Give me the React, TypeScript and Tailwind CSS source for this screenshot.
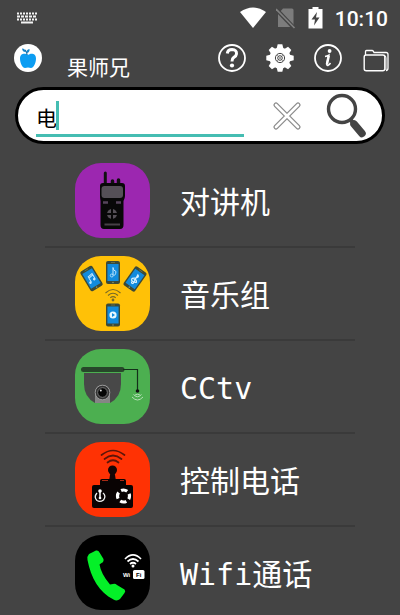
import { memo, useState, type ReactNode } from "react";

const StatusBar = memo(function StatusBar() {
  return (
    <div className="flex h-9 items-center justify-between pl-4 pr-3">
      <svg width="22" height="12" viewBox="0 0 22 12" fill="none" stroke="#f4f4f4">
        <path d="M1 1.500H21" strokeWidth="2" strokeDasharray="2 1" />
        <path d="M1 4.500H21" strokeWidth="2" strokeDasharray="3 1" />
        <path d="M1 7.500H21" strokeWidth="2" strokeDasharray="2 1" />
        <path d="M5 10.500H17" strokeWidth="2" />
      </svg>
      <div className="flex items-center">
        <svg width="26" height="22" viewBox="0 0 26 22" fill="#fff">
          <path d="M0 5Q13-4 26 5L13 21Z" />
        </svg>
        <svg className="ml-2.5" width="20" height="22" viewBox="0 0 20 22">
          <path d="M7 1.500H16Q17.500 1.500 17.500 3V20H2V7Z" fill="#7c7c7c" />
          <path d="M0 2L18 21" stroke="#444" strokeWidth="4" />
          <path d="M0 2L18.500 21" stroke="#808080" strokeWidth="1.700" />
        </svg>
        <svg className="ml-3" width="15" height="22" viewBox="0 0 15 22">
          <path d="M4.500 0H10.500V2H14.500V21.500H.5V2H4.500Z" fill="#fff" />
          <path d="M9 5L3.500 12.500H7L6 18.500L11.500 10.500H8Z" fill="#444" />
        </svg>
        <span className="ml-3 pt-0.5 font-['Roboto',sans-serif] text-[21px] font-medium leading-9 text-white">
          10:10
        </span>
      </div>
    </div>
  );
});

function GearIcon() {
  return (
    <svg width="28" height="28" viewBox="0 0 28 28">
      <g fill="#fff">
        <circle cx="14" cy="14" r="10.500" />
        {[0, 45, 90, 135, 180, 225, 270, 315].map((angle) => (
          <path
            key={angle}
            d="M10.500 5L11.700 .3H16.300L17.500 5Z"
            transform={`rotate(${angle} 14 14)`}
          />
        ))}
      </g>
      <g fill="none" stroke="#444">
        <circle cx="14" cy="14" r="4.600" />
        <circle cx="14" cy="14" r="2.300" />
        <path d="M11 11L17 17M17 11L11 17" strokeWidth=".5" />
      </g>
    </svg>
  );
}

const Header = memo(function Header() {
  return (
    <header className="flex h-12 items-start pl-3.5 pr-2.5 pt-2">
      <svg width="28" height="28" viewBox="0 0 28 28">
        <circle cx="14" cy="14" r="14" fill="#fff" />
        <path
          d="M14 11C16 9 22 8.500 22 14.500C22 19 19.500 24 17 24Q14 23 11 24C8.500 24 6 19 6 14.500C6 8.500 12 9 14 11Z"
          fill="#0c9df2"
        />
        <path d="M13 11Q13 8 11 6" fill="none" stroke="#176fa8" strokeWidth="1.300" />
        <path d="M8 4.500Q11.500 4.500 11.500 8Q8.500 8 8 4.500ZM13 9Q12 5.500 15.500 5Q16 8 13 9Z" fill="#1685c9" />
      </svg>
      <h1 className="ml-[25px] mt-2.5 font-['Noto_Sans_CJK_SC',sans-serif] text-[21px] leading-6 text-white">
        果师兄
      </h1>
      <nav className="ml-auto flex gap-5">
        <button type="button" aria-label="帮助">
          <svg width="28" height="28" viewBox="0 0 28 28" fill="none" stroke="#fff">
            <circle cx="14" cy="14" r="13" strokeWidth="1.800" />
            <path d="M9.300 9.500Q9.700 5.500 14.100 5.500Q18.800 5.800 18.500 9.800Q18.300 12 15.800 13.400Q14 14.500 14 17.500" strokeWidth="3" />
            <circle cx="14" cy="21.500" r="2.100" fill="#fff" stroke="none" />
          </svg>
        </button>
        <button type="button" aria-label="设置">
          <GearIcon />
        </button>
        <button type="button" aria-label="关于">
          <svg width="28" height="28" viewBox="0 0 28 28" fill="none" stroke="#fff">
            <circle cx="14" cy="14" r="13" strokeWidth="1.800" />
            <circle cx="15.600" cy="7" r="1.900" fill="#fff" stroke="none" />
            <path d="M11 12.500Q13 12.300 14.800 11.200L12.800 19.500Q12.500 22 14.300 21.200Q15.500 20.500 16.500 19" strokeWidth="1.500" />
            <path d="M14.800 11.500L12.900 20.500" strokeWidth="2.500" />
          </svg>
        </button>
        <button type="button" aria-label="文件夹">
          <svg width="28" height="28" viewBox="0 0 28 28" fill="none" stroke="#fff">
            <path d="M3.500 11V7.500Q3.500 6.500 4.500 6.500H10Q11 6.500 11.500 7.500L12 8.500H24Q26 8.500 26 10.500V24Q26 26.500 24 26.500" strokeWidth="1.300" />
            <rect x="2.200" y="11" width="20.600" height="15.800" rx="2" strokeWidth="1.400" />
            <path d="M22 11Q24 11.500 24 14V26" strokeWidth="1" />
          </svg>
        </button>
      </nav>
    </header>
  );
});

function SearchBar() {
  const [query, setQuery] = useState("电");

  return (
    <form
      className="mx-[15px] mt-[3px] flex h-[57px] shrink-0 items-center rounded-full border-3 border-black bg-white pl-[18px] pr-3.5"
      onSubmit={(e) => e.preventDefault()}
    >
      <div className="relative mr-7 mt-1 min-w-0 flex-1">
        <input
          type="text"
          aria-label="搜索"
          value={query}
          onChange={(e) => setQuery(e.target.value)}
          className="block h-[38px] w-full border-b-3 border-[#45bdb2] bg-transparent pt-0.5 font-['Noto_Sans_CJK_SC',sans-serif] text-[21px] leading-8 text-black caret-transparent outline-none"
        />
        <span className="absolute left-5 top-0.5 h-[29px] w-[3px] bg-[#45bdb2]" />
      </div>
      <button type="button" aria-label="清除" onClick={() => setQuery("")}>
        <svg width="30" height="30" viewBox="0 0 30 30" fill="none" strokeLinecap="round">
          <path d="M4 4L26 26M26 4L4 26" stroke="#8c8c8c" strokeWidth="5.200" />
          <path d="M4 4L26 26M26 4L4 26" stroke="#fff" strokeWidth="2.600" />
        </svg>
      </button>
      <button type="submit" aria-label="查找" className="ml-6">
        <svg width="42" height="46" viewBox="0 0 42 46" fill="none" stroke="#444">
          <circle cx="16" cy="16" r="13.500" strokeWidth="3.400" />
          <path d="M24 26L27 30" strokeWidth="4" />
          <path d="M28 31L36 40.500" strokeWidth="7.500" strokeLinecap="round" />
        </svg>
      </button>
    </form>
  );
}

function RadioIcon() {
  return (
    <>
      <path d="M30.300 10V24" stroke="#111" strokeWidth="3" strokeLinecap="round" />
      <path d="M37.500 18V24M43.500 17V24" stroke="#111" strokeWidth="3.500" strokeLinecap="round" />
      <path
        d="M28 20H47Q50 20 50 23V33Q50 35 48.500 38V62Q48.500 66 45 66H29Q25.500 66 25.500 62V38Q25 35 25 33V23Q25 20 28 20Z"
        fill="#080808"
      />
      <rect x="26.500" y="23" width="21.500" height="12" rx="3" fill="#555057" />
      <path d="M28 39.500H33M41 39.500H46" stroke="#55445b" strokeWidth="2.500" />
      <circle cx="37" cy="51" r="5" fill="#555057" />
      <path d="M37 45V57M31 51H43" stroke="#080808" strokeWidth="2" />
      <path d="M29.500 61.500H45" stroke="#474047" strokeWidth="2" />
    </>
  );
}

function Phone({ transform, children }: { transform: string; children: ReactNode }) {
  return (
    <g transform={transform}>
      <rect x="-7" y="-11.500" width="14" height="23" rx="2" fill="#3d4a37" />
      <rect x="-5.600" y="-8.500" width="11.200" height="17" fill="#128bdd" />
      <path d="M-2-10H2" stroke="#758054" strokeWidth=".7" />
      <circle cy="10" r=".8" fill="#8a956a" />
      {children}
    </g>
  );
}

function MusicIcon() {
  return (
    <>
      <Phone transform="translate(16.500 22.500) rotate(-31)">
        <path d="M-2 3V-3L3-4V2M-2-1.500L3-2.500" fill="none" stroke="#c3e8ff" strokeWidth="1" />
        <circle cx="-3" cy="3" r="1.300" fill="#c3e8ff" />
        <circle cx="2" cy="2" r="1.300" fill="#c3e8ff" />
      </Phone>
      <Phone transform="translate(38 16.500)">
        <path d="M0 3V-5Q0-2 3-1Q3 1 1.500 3" fill="none" stroke="#c3e8ff" strokeWidth="1" />
        <circle cx="-1.200" cy="3" r="1.500" fill="none" stroke="#c3e8ff" strokeWidth=".8" />
      </Phone>
      <Phone transform="translate(60 23) rotate(35)">
        <path
          d="M1 5Q-1 6-1 4M1 5L0-5Q3-4 0-1Q-4 1-2 3Q1 4 3 2Q2-1-1 1"
          fill="none"
          stroke="#d5f0ff"
          strokeWidth="1.200"
        />
      </Phone>
      <Phone transform="translate(38 59)">
        <circle r="3.600" fill="#e9f8ff" />
        <path d="M-1-2L2 0L-1 2Z" fill="#128bdd" />
      </Phone>
      <g fill="none" stroke="#786a27" strokeWidth="1.100">
        <path d="M30.500 37Q38 30 45.500 37" />
        <path d="M33 39.500Q38 35 43 39.500" />
        <path d="M35.300 41.700Q38 39.500 40.700 41.700" />
      </g>
      <circle cx="38" cy="44" r="1.400" fill="#786a27" />
    </>
  );
}

function CameraIcon() {
  return (
    <>
      <path d="M9 24H46V35Q46 48 35 54H20Q9 48 9 35Z" fill="#484848" />
      <path d="M20 54V44Q20 36 27.500 36Q35 36 35 44V54Z" fill="#858585" />
      <path d="M8.500 20.500H47" stroke="#27472a" strokeWidth="5" strokeLinecap="round" />
      <path d="M48 20.500H62.500V42" fill="none" stroke="#14301a" strokeWidth="1.200" />
      <circle cx="27.500" cy="43.500" r="7.300" fill="#333" stroke="#aaa" strokeWidth=".8" />
      <circle cx="27.500" cy="43.500" r="4.800" fill="#050505" stroke="#888" strokeWidth=".8" />
      <circle cx="25.800" cy="41.500" r="1" fill="#ddd" />
      <circle cx="62.500" cy="42" r="1.800" fill="#111" />
      <g fill="none" stroke="#b4deb6" strokeWidth="1">
        <path d="M60 46Q62.500 44.500 65 46" />
        <path d="M58.500 45.500Q62.500 50 66.500 45.500" />
        <path d="M57 48Q62.500 54 68 48" />
      </g>
    </>
  );
}

function RemoteIcon() {
  return (
    <>
      <g fill="none" stroke="#5c1509" strokeWidth="1.700" strokeLinecap="round">
        <path d="M26.500 13Q38 4 49.500 13" />
        <path d="M29.500 17Q38 10 46.500 17" />
        <path d="M32.500 20.500Q38 16 43.500 20.500" />
      </g>
      <circle cx="37.500" cy="28" r="4.500" fill="#150606" />
      <path d="M35.500 30H39.500L41 39H34Z" fill="#150606" />
      <path d="M27 37H49Q51 37 51 39V44H25V39Q25 37 27 37Z" fill="#090303" />
      <path d="M27 38.500H33M45 38.500H49" stroke="#a82a14" strokeWidth="1" />
      <rect x="17" y="43" width="41" height="23" rx="2" fill="#090303" />
      <path d="M22 51Q18.500 55 22 58.500Q25 60.500 28.500 58Q31.500 54 28 51" fill="none" stroke="#eee" strokeWidth="1.300" />
      <path d="M25 49V56" stroke="#fff" strokeWidth="1.500" />
      <circle cx="25" cy="49" r="1.800" fill="#fff" />
      <circle cx="25" cy="56" r="1.300" fill="#fff" />
      <circle
        cx="48.500"
        cy="54"
        r="6"
        fill="none"
        stroke="#fff"
        strokeWidth="3.200"
        strokeDasharray="6.400 3.025"
        strokeDashoffset="3.200"
      />
    </>
  );
}

function WifiCallIcon() {
  return (
    <>
      <path
        d="M14 19L21 15.500Q23.500 15 24.500 17.500L28.500 24Q29 27 26.500 28L24.500 29.500Q26 39 35 49.500L38 49Q40 48 42 50L49.500 54.500Q51 56 49.500 58L45 64Q42 66.500 38.500 64.500C24 57 16 43 12.500 25Q12 21 14 19Z"
        fill="#04f028"
      />
      <g fill="none" stroke="#fff" strokeWidth="1.700">
        <path d="M50 24Q58 16 66 24" />
        <path d="M52.500 26.500Q58 21.500 63.500 26.500" />
        <path d="M55 29Q58 26.500 61 29" />
      </g>
      <circle cx="58" cy="31" r="1.500" fill="#fff" />
      <rect x="58" y="35" width="11.500" height="9" rx="1.500" fill="#fff" />
      <g fontFamily="Liberation Sans, sans-serif" fontSize="6" fontWeight="bold">
        <text x="48" y="41.500" fill="#fff">
          Wi
        </text>
        <text x="61" y="41.500" fill="#000">
          Fi
        </text>
      </g>
    </>
  );
}

const items = [
  { name: "对讲机", tile: "bg-[#9c27b0]", icon: <RadioIcon /> },
  { name: "音乐组", tile: "bg-[#ffc107]", icon: <MusicIcon /> },
  { name: "CCtv", tile: "bg-[#4caf50]", icon: <CameraIcon /> },
  { name: "控制电话", tile: "bg-[#ff3204]", icon: <RemoteIcon /> },
  { name: "Wifi通话", tile: "bg-black", icon: <WifiCallIcon /> },
];

const ListItem = memo(function ListItem({
  name,
  tile,
  icon,
}: {
  name: string;
  tile: string;
  icon: ReactNode;
}) {
  return (
    <li className="border-b-2 border-[#3a3a3a] last:border-b-0">
      <button type="button" className="flex w-full items-center gap-[30px] py-2 pl-[30px] text-left">
        <span className={`block shrink-0 overflow-hidden rounded-[26px] ${tile}`}>
          <svg className="block" width="75" height="75" viewBox="0 0 75 75">
            {icon}
          </svg>
        </span>
        <span className="pt-1 font-['DejaVu_Sans_Mono','Noto_Sans_CJK_SC',monospace] text-[30px] leading-10 text-white">
          {name}
        </span>
      </button>
    </li>
  );
});

export default function App() {
  return (
    <div className="flex h-screen flex-col overflow-hidden bg-[#444]">
      <StatusBar />
      <Header />
      <SearchBar />
      <ul className="mx-[45px] mt-[11px] min-h-0 flex-1 overflow-hidden">
        {items.map((item) => (
          <ListItem key={item.name} {...item} />
        ))}
      </ul>
    </div>
  );
}
